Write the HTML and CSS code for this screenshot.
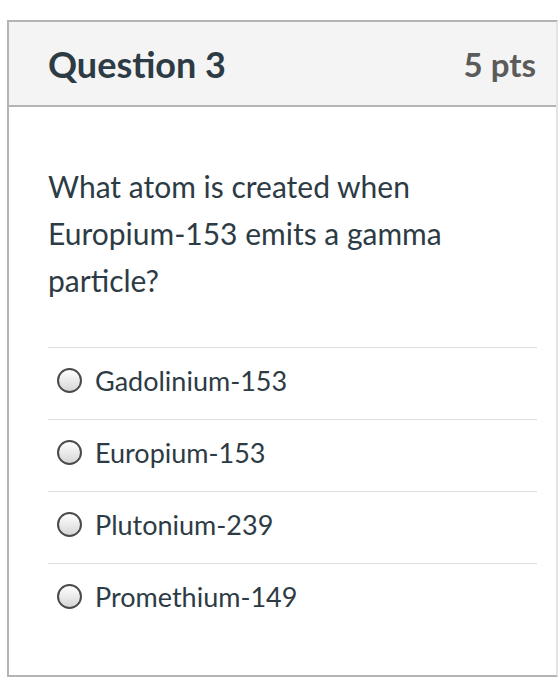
FILE: index.html
```html
<!DOCTYPE html>
<html>
<head>
<meta charset="utf-8">
<link rel="stylesheet" href="styles.css">
</head>
<body>
<div class="card">
  <div class="header">
    <h2 class="title">Question 3</h2>
    <span class="pts">5 pts</span>
  </div>
  <div class="content">
    <p class="question">What atom is created when Europium-153 emits a gamma particle?</p>
    <div class="answers">
      <label class="answer"><span class="radio"></span><span class="label">Gadolinium-153</span></label>
      <label class="answer"><span class="radio"></span><span class="label">Europium-153</span></label>
      <label class="answer"><span class="radio"></span><span class="label">Plutonium-239</span></label>
      <label class="answer"><span class="radio"></span><span class="label">Promethium-149</span></label>
    </div>
  </div>
</div>
</body>
</html>
```
FILE: styles.css
```css
html, body {
  margin: 0;
  padding: 0;
  overflow: hidden;
  background: #ffffff;
  font-family: Lato, "Noto Sans", sans-serif;
}
.card {
  margin: 20px 0 0 7px;
  width: 551px;
  border: 2px solid #b4b4b4;
  border-right-color: #e4e4e4;
  box-sizing: border-box;
  background: #fff;
}
.header {
  background: #f4f4f4;
  border-bottom: 2px solid #b4b4b4;
  height: 85px;
  box-sizing: border-box;
  display: flex;
  align-items: center;
  justify-content: space-between;
  padding: 0 20px 0 39px;
}
.title {
  margin: 0;
  font-size: 36px;
  font-weight: 700;
  color: #2d3b45;
}
.pts {
  font-size: 33px;
  font-weight: 700;
  color: #5b5b5b;
}
.content {
  padding: 56px 0 0 39px;
  height: 568px;
  box-sizing: border-box;
}
.question {
  margin: 0;
  width: 460px;
  font-size: 30px;
  line-height: 47px;
  color: #2d3b45;
}
.answers {
  margin-top: 43px;
  width: 489px;
}
.answer {
  display: flex;
  align-items: center;
  height: 72px;
  box-sizing: border-box;
  border-top: 1.5px solid #dedede;
  padding: 0 0 6px 9px;
}
.radio {
  width: 25px;
  height: 25px;
  box-sizing: border-box;
  border-radius: 50%;
  border: 2px solid #4a4a4a;
  background: linear-gradient(#ffffff, #d6d6d6);
  flex: none;
}
.label {
  margin-left: 13px;
  font-size: 27px;
  color: #2d3b45;
}
```
